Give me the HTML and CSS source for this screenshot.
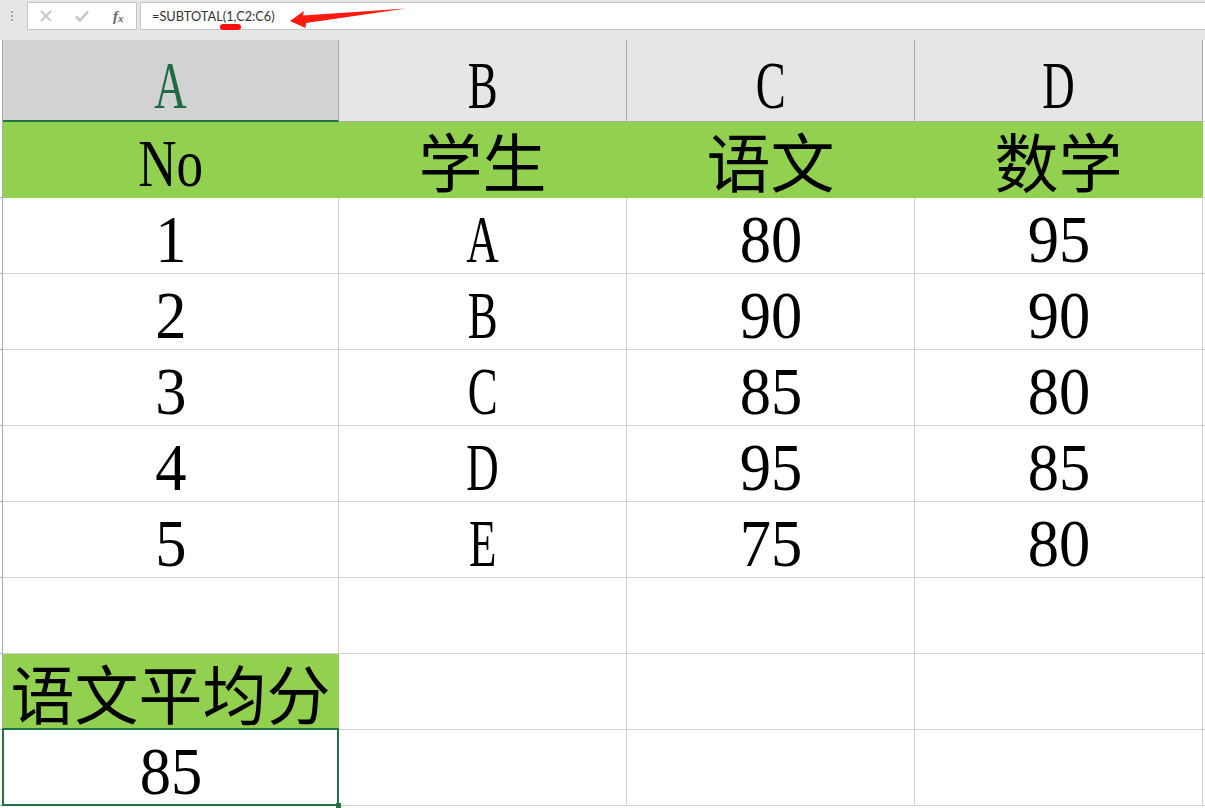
FILE: index.html
```html
<!DOCTYPE html>
<html lang="zh">
<head>
<meta charset="utf-8">
<title>SUBTOTAL</title>
<link rel="stylesheet" href="styles.css">
</head>
<body>
<div class="formula-bar">
  <div class="grip"><i></i><i></i><i></i></div>
  <div class="actions">
    <svg class="icon x" viewBox="0 0 12 12"><path d="M1 1 11 11M11 1 1 11" fill="none" stroke="#c6c6c6" stroke-width="1.8"/></svg>
    <svg class="icon check" viewBox="0 0 14 12"><path d="M1 6.500 5 10.500 13 1.500" fill="none" stroke="#c6c6c6" stroke-width="2.6"/></svg>
    <span class="fx">f<sub>x</sub></span>
  </div>
  <div class="input">=SUBTOTAL(1,C2:C6)</div>
</div>
<svg class="mark" viewBox="0 0 1205 40" width="1205" height="40">
  <rect x="220" y="24" width="21" height="6" rx="3" fill="#fe0f0f"/>
  <path d="M290 21 304 11 303 15.500 406 8.500 306 23 305.500 28Z" fill="#fe1a10"/>
</svg>
<div class="sheet">
  <div class="row head">
    <div class="cell sel"><span class="cap">A</span></div><div class="cell"><span class="cap">B</span></div><div class="cell"><span class="cap">C</span></div><div class="cell"><span class="cap">D</span></div>
  </div>
  <div class="row">
    <div class="cell fill"><span class="mix">No</span></div><div class="cell fill cjk">学生</div><div class="cell fill cjk">语文</div><div class="cell fill cjk">数学</div>
  </div>
  <div class="row"><div class="cell"><span class="num">1</span></div><div class="cell"><span class="cap">A</span></div><div class="cell"><span class="num">80</span></div><div class="cell"><span class="num">95</span></div></div>
  <div class="row"><div class="cell"><span class="num">2</span></div><div class="cell"><span class="cap">B</span></div><div class="cell"><span class="num">90</span></div><div class="cell"><span class="num">90</span></div></div>
  <div class="row"><div class="cell"><span class="num">3</span></div><div class="cell"><span class="cap">C</span></div><div class="cell"><span class="num">85</span></div><div class="cell"><span class="num">80</span></div></div>
  <div class="row"><div class="cell"><span class="num">4</span></div><div class="cell"><span class="cap">D</span></div><div class="cell"><span class="num">95</span></div><div class="cell"><span class="num">85</span></div></div>
  <div class="row"><div class="cell"><span class="num">5</span></div><div class="cell"><span class="cap">E</span></div><div class="cell"><span class="num">75</span></div><div class="cell"><span class="num">80</span></div></div>
  <div class="row"><div class="cell"></div><div class="cell"></div><div class="cell"></div><div class="cell"></div></div>
  <div class="row"><div class="cell fill cjk">语文平均分</div><div class="cell"></div><div class="cell"></div><div class="cell"></div></div>
  <div class="row"><div class="cell active"><span class="num">85</span><span class="handle"></span></div><div class="cell"></div><div class="cell"></div><div class="cell"></div></div>
</div>
</body>
</html>
```
FILE: styles.css
```css
html, body { margin: 0; height: 100%; overflow: hidden; background: #fff; }
body { position: relative; width: 1205px; height: 808px; }

.formula-bar { display: flex; align-items: stretch; height: 28px; padding-top: 2px; padding-bottom: 10px; background: #e6e6e6; }
.grip { width: 24px; padding-right: 3px; display: flex; flex-direction: column; align-items: center; justify-content: center; gap: 2px; }
.grip i { width: 2px; height: 2px; background: #a8a8a8; }
.actions { width: 108px; height: 26px; display: flex; align-items: center; background: #fff; border: 1px solid #c6c6c6; }
.icon.x { width: 12px; height: 12px; margin-left: 12px; }
.icon.check { width: 14px; height: 12px; margin-left: 23px; }
.fx { margin-left: 24px; font: italic bold 15px "Liberation Serif", serif; color: #666; line-height: 1; }
.fx sub { font-size: 11px; vertical-align: -1px; }
.input { flex: 1; margin-left: 3px; height: 26px; background: #fff; border: 1px solid #c6c6c6; border-right: 0; padding-left: 11px; font: 12.800px/26px Lato, "Liberation Sans", sans-serif; color: #333; }

.mark { position: absolute; left: 0; top: 0; }

.sheet { display: flex; flex-direction: column; }
.row { display: grid; grid-template-columns: 336px 288px 288px 288px; grid-template-rows: 76px; padding-left: 3px; height: 76px; position: relative; }
.row::before { content: ""; position: absolute; left: 0; top: 0; bottom: 0; width: 2px; border-right: 1px solid #aaa; border-bottom: 1px solid #aaa; }
.row::after { content: ""; position: absolute; left: 1202px; top: 0; bottom: 0; width: 3px; border-bottom: 1px solid #d0d0d0; }
.cell { position: relative; box-sizing: border-box; border-right: 1px solid #d0d0d0; border-bottom: 1px solid #d0d0d0; text-align: center; font: 68px/83px "Liberation Serif", serif; color: #000; }
.num, .cap, .mix { display: inline-block; }
.num { transform: scaleX(.92); }
.cap { transform: scaleX(.66); }
.mix { transform: scaleX(.78); }
.cjk { font: 64px/75px "Noto Sans CJK SC", serif; white-space: nowrap; }
.fill { background: #92d050; border-color: #92d050; }

.head { height: 82px; grid-template-rows: 82px; }
.head .cell { background: #e6e6e6; border-right-color: #aaa; border-bottom-color: #aaa; line-height: 90px; }
.head::before { border-bottom: 0; }
.head .sel { background: #d2d2d2; color: #1f6b45; border-bottom: 2px solid #217346; }

.active { z-index: 2; }
.active::before { content: ""; position: absolute; top: -2px; left: -1px; right: -1px; bottom: -1px; border: 2px solid #217346; }
.handle { position: absolute; right: -3px; bottom: -3px; width: 5px; height: 5px; background: #217346; }
```
